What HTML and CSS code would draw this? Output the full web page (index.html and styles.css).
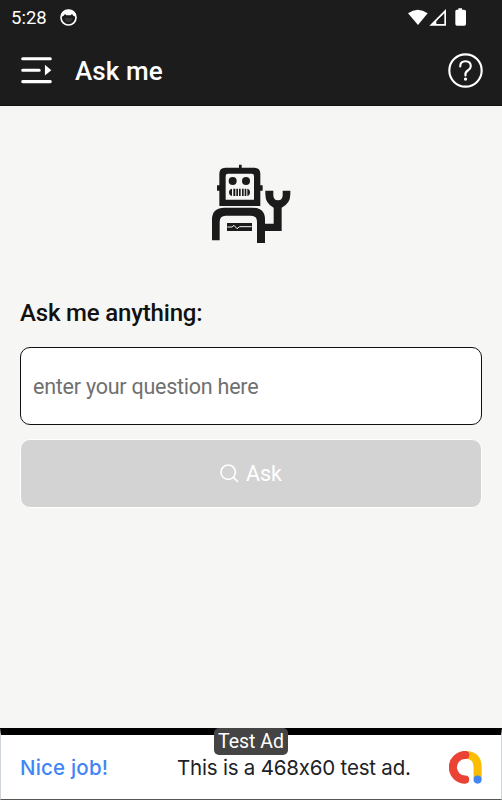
FILE: index.html
```
<!DOCTYPE html>
<html lang="en">
<head>
<meta charset="utf-8">
<title>Ask me</title>
<link rel="stylesheet" href="styles.css">
</head>
<body>
<div class="screen">
  <header class="header">
    <div class="status">
      <span class="clock">5:28</span>
      <svg class="face" viewBox="0 0 51 51"><circle cx="25.500" cy="25.500" r="22.500" fill="none" stroke="#fff" stroke-width="5"/><path fill="#fff" d="M5 23V12l8-7q12-5 25 0l8 7v11l-6-3-4-5-4 4H19l-4-4-4 5z"/><path d="M14 27q1 11 7 12h9q6-1 7-12" fill="#333"/></svg>
      <svg class="signals" viewBox="0 0 180 60" fill="#fff"><path d="M3 16Q32-5 62 16L33 51z"/><path fill-rule="evenodd" d="M67 53L117 3V53zM88 48h24V16L88 40z"/><path d="M93 43V35l13-11v19z" fill="#1c1c1c"/><path d="M149 5h5V1h11v4h6q6 0 6 5v38q0 5-5 5h-22q-5 0-5-5V10q0-5 4-5z"/></svg>
    </div>
    <div class="toolbar">
      <svg class="menu" viewBox="0 0 92 80"><path d="M5 5H87M5 39H54M5 73H87" fill="none" stroke="#fff" stroke-width="9" stroke-linecap="round"/><path d="M71 23L90 39 71 55z" fill="#fff"/></svg>
      <h1 class="title">Ask me</h1>
      <svg class="help" viewBox="0 0 106 106" fill="none" stroke="#fff" stroke-width="6.500"><circle cx="53" cy="53" r="49"/><path d="M37 41Q37 25 53 25T69 40Q69 47 60 53T53 68" stroke-linecap="round"/><circle cx="53" cy="79" r="5" fill="#fff" stroke="none"/></svg>
    </div>
  </header>
  <main class="content">
    <svg class="robot" viewBox="0 0 300 285" fill="#1b1b1b">
      <path d="M117 29h8v11h-8zM51 91h10v16H51zM179 91h9v16h-9z"/>
      <path fill-rule="evenodd" d="M76 38h87q18 0 18 18v97H58V56q0-18 18-18zM84 56q-7 0-7 7v71h85V63q0-7-7-7z"/>
      <circle cx="98" cy="78" r="12"/><circle cx="138" cy="78" r="12"/>
      <path d="M96 101q-9 2-9 11t9 11zM100 101h6v22h-6zM109 101h5v22h-5zM117 101h5v22h-5zM126 101h5v22h-5zM134 101h5v22h-5zM142 101q8 2 8 11t-8 11z"/>
      <path d="M36 256V193q0-35 38-35h82q39 0 39 35v13h26v-48q-25-12-25-40v-11h24v14q0 15 14 15t14-15v-14h23v11q0 28-26 40v70h-50v36h-24V201q0-19-19-19H77q-18 0-18 19v55z"/>
      <path d="M81 204h75v24H81z"/><path d="M82 216h14l6-5 9 10 8-6h36" fill="none" stroke="#f6f6f4" stroke-width="3"/>
    </svg>
    <h2 class="heading">Ask me anything:</h2>
    <div class="question">enter your question here</div>
    <div class="ask"><svg class="search" viewBox="0 0 58 58" fill="none" stroke="#fff" stroke-width="5"><circle cx="25" cy="25" r="22"/><path d="M41 41L55 55"/></svg><span>Ask</span></div>
  </main>
  <footer class="ad">
    <span class="badge">Test Ad</span>
    <span class="nice">Nice job!</span>
    <span class="copy">This is a 468x60 test ad.</span>
    <svg class="admob" viewBox="0 0 98 98" fill="none" stroke-width="24"><path d="M56 12Q85 16 85 48V82" stroke="#fbbc04"/><path d="M48 85A36.500 36.500 0 0 1 48 12" stroke="#ea4335" stroke-linecap="round"/><circle cx="48" cy="12" r="12" fill="#ea4335" stroke="none"/><circle cx="85" cy="85" r="12" fill="#4285f4" stroke="none"/></svg>
  </footer>
</div>
</body>
</html>
```
FILE: styles.css
```
* { box-sizing: border-box; }
body { margin: 0; font-family: Roboto, sans-serif; }
h1, h2 { margin: 0; font-weight: 500; }
svg { display: block; flex: none; }
.screen { width: 502px; height: 800px; display: flex; flex-direction: column; background: #f6f6f4; overflow: hidden; }
.header { height: 106px; background: #1c1c1c; color: #fff; border-bottom: 1px solid #111; }
.status { height: 36px; padding-left: 11px; display: flex; align-items: center; }
.clock { width: 49px; font-size: 18.5px; line-height: 36px; }
.face { width: 17px; height: 17px; margin-top: -2px; }
.signals { width: 60px; height: 20px; margin-left: 330px; margin-top: -1px; }
.toolbar { height: 69px; padding: 0 19px 0 21px; display: flex; align-items: center; }
.menu { width: 31px; height: 27px; }
.title { margin-left: 23px; font-size: 26px; line-height: 70px; letter-spacing: .1px; }
.help { width: 35px; height: 35px; margin-left: auto; }
.content { height: 622px; padding: 49px 20px 0; color: #111; }
.robot { width: 100px; height: 95px; margin-left: 180px; }
.heading { height: 32px; margin-top: 47px; font-size: 24px; line-height: 32px; letter-spacing: -.18px; white-space: nowrap; }
.question { height: 78px; margin-top: 18px; padding-left: 12px; border: 1.5px solid #111; border-radius: 10px; background: #fff; color: #707070; font-size: 21.5px; line-height: 77px; letter-spacing: -.24px; }
.ask { height: 69px; margin-top: 14px; border: 1px solid #fff; border-radius: 10px; background: #d3d3d3; color: #fff; display: flex; align-items: center; justify-content: center; gap: 7px; font-size: 21.5px; }
.search { width: 19px; height: 19px; }
.ad { position: relative; height: 72px; border: solid #cfd4da; border-width: 0 1px; border-top: 7px solid #000; border-bottom: 1px solid #555; background: #fff; padding: 0 19px; display: flex; align-items: center; color: #202124; font-family: Inter, sans-serif; font-size: 20.5px; font-feature-settings: "calt" 0; white-space: nowrap; }
.badge { position: absolute; left: 213px; top: -7px; width: 74px; height: 27px; border-radius: 5px; background: #444; color: #fff; font: 19.5px/27px Roboto, sans-serif; text-align: center; }
.nice { width: 157px; color: #4285f4; font-weight: 500; letter-spacing: .2px; }
.copy { letter-spacing: -.2px; }
.admob { width: 33px; height: 33px; margin-left: auto; }
```
